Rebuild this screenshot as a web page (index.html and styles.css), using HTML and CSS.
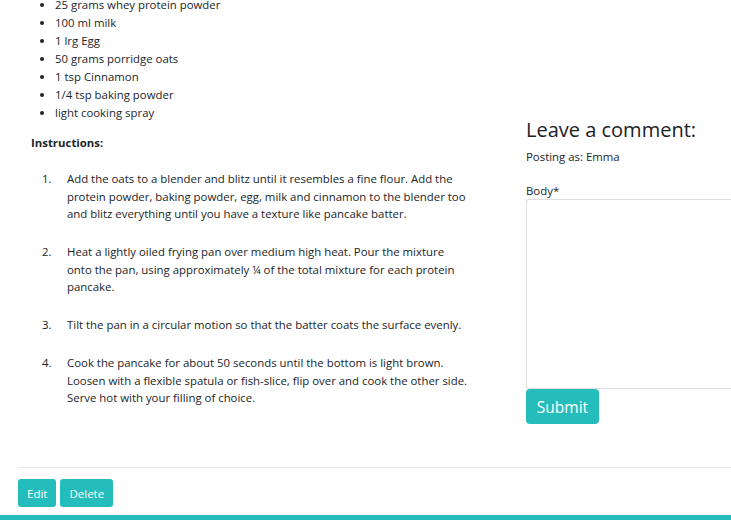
FILE: index.html
```html
<!DOCTYPE html>
<html lang="en">
<head>
<meta charset="utf-8">
<title>Protein Pancakes</title>
<link rel="stylesheet" href="styles.css">
</head>
<body>
<div class="page">
  <div class="content">
    <div class="recipe">
      <ul class="ingredients">
        <li>25 grams whey protein powder</li>
        <li>100 ml milk</li>
        <li>1 lrg Egg</li>
        <li>50 grams porridge oats</li>
        <li>1 tsp Cinnamon</li>
        <li>1/4 tsp baking powder</li>
        <li>light cooking spray</li>
      </ul>
      <p class="label">Instructions:</p>
      <ol class="steps">
        <li><span>Add the oats to a blender and blitz until it resembles a fine flour. Add the protein powder, baking powder, egg, milk and cinnamon to the blender too and blitz everything until you have a texture like pancake batter.</span></li>
        <li><span>Heat a lightly oiled frying pan over medium high heat. Pour the mixture onto the pan, using approximately ¼ of the total mixture for each protein pancake.</span></li>
        <li><span>Tilt the pan in a circular motion so that the batter coats the surface evenly.</span></li>
        <li><span>Cook the pancake for about 50 seconds until the bottom is light brown. Loosen with a flexible spatula or fish-slice, flip over and cook the other side. Serve hot with your filling of choice.</span></li>
      </ol>
    </div>
    <div class="comment">
      <h2 class="comment-title">Leave a comment:</h2>
      <p class="posting">Posting as: Emma</p>
      <label class="field-label" for="body">Body*</label>
      <textarea id="body" class="field"></textarea>
      <button class="btn btn-lg" type="button">Submit</button>
    </div>
  </div>
  <hr class="divider">
  <div class="actions">
    <button class="btn btn-sm" type="button">Edit</button>
    <button class="btn btn-sm" type="button">Delete</button>
  </div>
</div>
<div class="footer-bar"></div>
</body>
</html>
```
FILE: styles.css
```css
html, body {
  margin: 0;
  padding: 0;
  overflow: hidden;
  background: #fff;
}
body {
  font-family: "Open Sans", "Noto Sans", sans-serif;
  font-size: 11.4px;
  color: #212529;
  width: 731px;
  height: 520px;
  display: flex;
  flex-direction: column;
}
.page {
  padding-left: 18px;
  flex: 1;
}
.content {
  display: grid;
  grid-template-columns: 508px 260px;
}
.recipe {
  padding-left: 13px;
}
.ingredients {
  margin: -4px 0 0 0;
  padding-left: 24px;
  line-height: 18px;
}
.label {
  margin: 12px 0 0 0;
  font-weight: 700;
  line-height: 18px;
}
.steps {
  margin: 18px 0 0 0;
  padding-left: 11px;
  line-height: 17.5px;
  list-style: none;
  counter-reset: step;
}
.steps li {
  counter-increment: step;
  display: grid;
  grid-template-columns: 25px 403px;
  margin-bottom: 20.5px;
}
.steps li::before {
  content: counter(step) ".";
}
.steps li:last-child {
  margin-bottom: 0;
}
.comment {
  padding-top: 117px;
  display: flex;
  flex-direction: column;
  align-items: flex-start;
}
.comment-title {
  margin: 0;
  font-size: 20px;
  font-weight: 500;
  line-height: 26px;
  color: #1d2125;
}
.posting {
  margin: 5px 0 0 0;
  line-height: 18px;
}
.field-label {
  margin-top: 17px;
  line-height: 16px;
}
.field {
  width: 260px;
  height: 190px;
  box-sizing: border-box;
  border: 1px solid #dedede;
  border-right: none;
  border-radius: 3px 0 0 3px;
  margin: 0;
  resize: none;
  display: block;
}
.btn {
  background: #25bcbc;
  color: #fff;
  border: none;
  font-family: inherit;
  cursor: pointer;
}
.btn-lg {
  font-size: 15.5px;
  height: 35px;
  width: 73px;
  border-radius: 4px;
  margin-top: 0;
  padding: 0;
}
.divider {
  margin: 43px 0 0 0;
  border: none;
  border-top: 1px solid #e6e6e6;
  height: 0;
}
.actions {
  margin-top: 11px;
  display: flex;
  gap: 4px;
}
.btn-sm {
  font-size: 11.5px;
  height: 28px;
  padding: 0 9px;
  border-radius: 3px;
}
.footer-bar {
  height: 5px;
  background: #25bcbc;
}
```
